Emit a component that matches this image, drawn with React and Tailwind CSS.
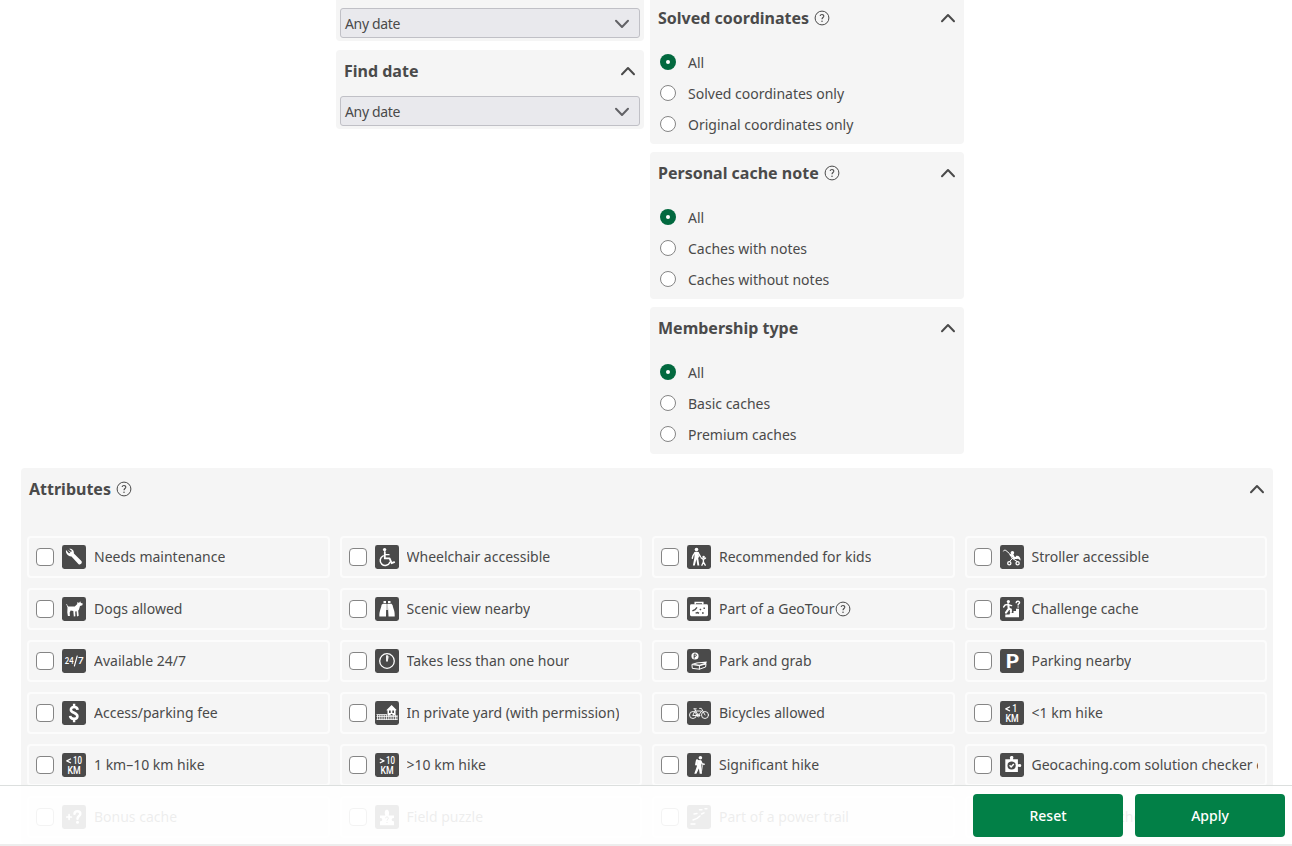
import React from "react";

const Chevron = ({ down = false, className = "" }) => (
  <svg width="16" height="10" viewBox="0 0 16 10" className={className} fill="none" stroke="currentColor" strokeWidth="2" strokeLinecap="round" strokeLinejoin="round">
    <path d={down ? "M2 1.8 L8 8 L14 1.8" : "M2 8.2 L8 2 L14 8.2"} />
  </svg>
);

const Help = () => (
  <svg width="16" height="16" viewBox="0 0 16 16" className="shrink-0" fill="none" stroke="#4a4a4a">
    <circle cx="8" cy="8" r="6.9" strokeWidth="1" />
    <path d="M6.2 6.1 C6.2 4 9.9 4 9.8 6.2 C9.7 7.5 8 7.6 8 9.3" strokeWidth="1.1" />
    <circle cx="8" cy="11.3" r="0.75" fill="#4a4a4a" stroke="none" />
  </svg>
);

const line = { fill: "none", stroke: "#fff", strokeLinecap: "round", strokeLinejoin: "round" };

const Km = ({ sign, value }) => (
  <g fill="#fff" fontFamily="Roboto, sans-serif" fontWeight="500">
    <path {...line} strokeWidth="1.2" strokeLinecap="butt" transform={value === "10" ? "" : "translate(1 0)"} d={sign === "<" ? "M9 5.8 L4.8 7.9 L9 10" : "M4.8 5.8 L9 7.9 L4.8 10"} />
    <text x={value === "10" ? 11 : 12.2} y="11" fontSize="10.5" textLength={value === "10" ? 9 : 5} lengthAdjust="spacingAndGlyphs">{value}</text>
    <text x="5.4" y="20.6" fontSize="11" textLength="13.2" lengthAdjust="spacingAndGlyphs">KM</text>
  </g>
);

const glyphs = {
  wrench: (
    <path fill="#fff" d="M5.2 4.4 L8.3 7.6 L10 6 L7.1 3.8 C9.4 3.2 12.2 4.8 11.9 8.4 L19.4 16.1 C20.7 18 18.6 20.4 16.6 19.2 L9.5 11.4 C5.7 11.6 3.4 8.1 4 5.1 L7 8.4 L9 7 L5.2 4.4 Z" />
  ),
  wheelchair: (
    <g {...line}>
      <circle cx="9.6" cy="4.6" r="1.7" fill="#fff" stroke="none" />
      <path d="M9.8 7 V13.4 H14.6 L16.6 18.2 L19.2 17.2" strokeWidth="1.8" />
      <path d="M10 9.7 H14" strokeWidth="1.3" />
      <path d="M8.2 10.9 A5 5 0 1 0 14.9 17.2" strokeWidth="1.5" />
    </g>
  ),
  kids: (
    <g {...line}>
      <circle cx="9.5" cy="4.6" r="1.8" fill="#fff" stroke="none" />
      <path fill="#fff" stroke="none" d="M7.6 7 H11.4 L12 12 L11.2 13 L12.3 20.5 H10.4 L9.4 14.2 L7.8 20.5 H5.9 L7.4 12.4 Z" />
      <path d="M8.2 7.4 L6 10.6 L5.3 13.2 M10.9 7.4 L13.4 11.6" strokeWidth="1.4" />
      <circle cx="16.6" cy="12" r="1.3" fill="#fff" stroke="none" />
      <path d="M14 12.8 L16.3 14.4 L18.5 13.1 M16.4 14.4 V17 L14.9 20.2 M16.4 17 L18.2 20.2" strokeWidth="1.4" />
    </g>
  ),
  stroller: (
    <g {...line}>
      <path d="M3.5 6 Q4 4.3 5.8 5.4 L9.4 8.5 L12.4 13.5 L9.8 16.2 M12 13.2 L16.7 16.2" strokeWidth="1" />
      <circle cx="12.4" cy="7.7" r="1.8" fill="#fff" stroke="none" />
      <path d="M12.5 10 L14 13 H17 M10.8 9.9 L13 11.2" strokeWidth="2.2" />
      <path d="M15.5 11.2 C18 9.7 20.6 11.8 20.6 15.4 L17.8 13.4 Z" fill="#fff" stroke="none" />
      <circle cx="9.3" cy="18.2" r="1.6" strokeWidth="1.3" /><circle cx="17.6" cy="18.2" r="1.6" strokeWidth="1.3" />
    </g>
  ),
  dog: (
    <path fill="#fff" d="M4.2 7.1 C5.6 6.9 5.2 9.3 6.4 9.6 H12.8 L15.1 7.2 L15.5 5 L17 6 L18.2 4.2 L18.9 6 L20.8 6.6 L20.3 8.2 L18 8.9 L17 12.4 L16.2 13.8 L16.7 18.8 L15 19.4 L14.6 14.3 L13.2 14.4 L13.4 19.2 L11.8 19.4 L11.3 14 L8.7 13.4 L7.7 15.4 L7.9 19 H5.9 L5.3 15.4 L5.5 10.6 Z" />
  ),
  binoculars: (
    <g fill="#fff">
      <path d="M8.5 4 H11 V6 H8.5 Z M13 4 H15.5 V6 H13 Z M8 6.8 H11.2 L11 19.5 H4.4 C4.2 14 6 11.8 6.6 7.8 Z M12.8 6.8 H16.5 L17.6 8.2 C18.4 12.2 20 14 19.7 19.5 H13.5 Z" />
      <path d="M11 7 H13 V13 H11 Z" opacity=".7" />
    </g>
  ),
  geotour: (
    <g>
      <path fill="none" stroke="#fff" strokeWidth="1.5" d="M8.2 7.5 V5.5 H15.8 V7.5" />
      <rect x="3" y="7.2" width="18" height="12" rx="1.4" fill="#fff" />
      <path fill="none" stroke="#4a4a4a" strokeWidth="1.4" d="M5.4 13.8 L8 12.7 L10 10.4 M8.6 16.2 L10.6 15.5 L12 16.4 M12.8 12 L14 13 M15 16 H16.7 M17.2 10.6 V12" />
    </g>
  ),
  challenge: (
    <g {...line}>
      <circle cx="8.4" cy="4.6" r="1.6" fill="#fff" stroke="none" />
      <path d="M8.2 7.4 L8.8 11.7 L6 15.6 M8.8 11.6 L10.8 12.4 L10.9 15" strokeWidth="2.1" />
      <path d="M8 7.4 L5.1 8 L3.6 10 M9 8 L11.6 8.6" strokeWidth="1.4" />
      <path d="M5.3 20.2 V17.5 H9.5 L10 15.9 H13.5 V13.9 H16 V11.7 H19 V20.2 Z" fill="#fff" stroke="none" />
      <path d="M16.2 5.6 C16.4 3.7 19.8 3.9 19.5 5.8 C19.3 6.9 18.1 6.8 18.1 8" strokeWidth="1.4" />
      <circle cx="18.1" cy="10" r=".8" fill="#fff" stroke="none" />
    </g>
  ),
  allday: (
    <g fill="#fff" fontFamily="Lato, sans-serif" fontSize="9.6" fontWeight="700">
      <text x="2.8" y="15.2" textLength="8.8" lengthAdjust="spacingAndGlyphs">24</text>
      <path {...line} strokeWidth="1.1" d="M15.2 7 L12.4 17" />
      <text x="16" y="15.2">7</text>
    </g>
  ),
  clock: (
    <g {...line}>
      <circle cx="12" cy="12" r="7.3" strokeWidth="1.3" />
      <path d="M12 6.2 V12.6" strokeWidth="1.8" strokeLinecap="butt" />
      <path d="M12.6 6.6 L14.4 7.6 L12.8 11.4 Z" fill="#fff" stroke="none" opacity=".5" />
    </g>
  ),
  parkgrab: (
    <g {...line}>
      <circle cx="8" cy="7" r="3.6" fill="#fff" stroke="none" />
      <path d="M7.2 9.2 V5.1 H8.3 C9.7 5.1 9.7 7.4 8.3 7.4 H7.3" stroke="#4a4a4a" strokeWidth="1" />
      <path d="M5.3 15.6 L12.4 16.6 V20.2 L5.7 19.4 Z M12.4 16.6 L19 15 L18.6 18 L12.4 20.2" strokeWidth="1" />
      <path d="M4.6 15 L9.6 13.6 L19.8 12.6 L19.2 15 L12.4 16.8 Z" fill="#fff" stroke="none" />
      <path d="M8 15 L11 14.3 L17.6 13.9 L12.4 15.7 Z" fill="#4a4a4a" stroke="none" />
    </g>
  ),
  parking: (
    <text x="5.4" y="18.8" fill="#fff" fontFamily="Lato, sans-serif" fontSize="19.5" fontWeight="900" textLength="13.4" lengthAdjust="spacingAndGlyphs">P</text>
  ),
  dollar: (
    <g {...line} strokeLinecap="butt">
      <path d="M15.6 8.8 C15.3 4.9 8.6 5.1 8.9 8.8 C9.1 12.1 15.4 11.5 15.4 15.3 C15.3 18.8 8.5 18.9 8.1 14.9" strokeWidth="2.6" />
      <path d="M12.1 2.8 V6 M12.1 17.6 V21.2" strokeWidth="2.4" />
    </g>
  ),
  yard: (
    <g>
      <path fill="#fff" d="M11.3 9.3 L16.6 3.9 L21.6 9.1 L20.6 9.4 V14.5 H12.5 V9.6 Z" />
      <path fill="#4a4a4a" d="M14 9.6 H15.7 V12 H14 Z M17.3 9.6 H19 V12 H17.3 Z M15.7 13 H17.5 V14.5 H15.7 Z" />
      <path fill="none" stroke="#fff" strokeWidth=".8" d="M1.5 13.5 H12 M1.5 15.4 H22.5 M1.5 18.4 H22.5" />
      <path fill="none" stroke="#fff" strokeWidth=".8" d="M2.5 14 V19 M4.3 14 V19 M6.1 14 V19 M7.9 14 V19 M9.7 14 V19 M11.5 14 V19 M13.3 14 V19 M15.1 14 V19 M16.9 14 V19 M18.7 14 V19 M20.5 14 V19 M22 14 V19" />
    </g>
  ),
  bicycle: (
    <g {...line} strokeWidth=".9">
      <circle cx="6" cy="14" r="3.5" /><circle cx="18" cy="14" r="3.5" />
      <path d="M6 14 L8.3 9.3 L11.4 14.5 H6 M8.6 10 H14.7 L11.4 14.5 M18 14 L14.4 7.4 H12.6 M8.3 9.3 L7.8 8 M6.8 7.8 H9.3" />
      <circle cx="11.4" cy="14.5" r="1.3" />
    </g>
  ),
  hiker: (
    <g {...line}>
      <circle cx="13.4" cy="4.7" r="1.8" fill="#fff" stroke="none" />
      <path fill="#fff" stroke="none" d="M10.6 7 L14.3 7.3 L14.4 13 L15 20.7 H12.7 L11.9 15.4 L9.4 20.7 H7.3 L9.8 13.5 Z" />
      <path d="M10 7.4 L9.2 11.4" strokeWidth="2.2" /><path d="M13.9 8.4 L15.2 10.9 L17.2 11.2" strokeWidth="1.4" />
      <path d="M16 10.6 L14.6 18" strokeWidth=".7" />
    </g>
  ),
  checker: (
    <g>
      <path fill="#fff" d="M5.3 6.3 H10.1 V5.5 C8.6 2 14.8 2 13.1 5.5 V6.3 H17.9 V11.2 H19 C22 9.8 22 15 19 13.8 H17.9 V19 H5.3 Z" />
      <circle cx="11.6" cy="12.5" r="4.1" fill="#4a4a4a" />
      <path d="M9.6 12.3 L11.1 13.9 L13.8 11" fill="none" stroke="#fff" strokeWidth="1.5" />
    </g>
  ),
  bonus: (
    <g {...line}>
      <path d="M4.8 12 H9.4 M7.1 9.7 V14.3" strokeWidth="1.7" />
      <path d="M12.5 8.8 C12.8 5.3 18.7 5.5 18.3 9 C18.1 11.2 15.5 11 15.5 13.8" strokeWidth="2.5" />
      <circle cx="15.5" cy="17.2" r="1.5" fill="#fff" stroke="none" />
    </g>
  ),
  puzzle: (
    <g>
      <path fill="#fff" d="M5 10.4 H10.3 C7.6 3 16 3 13.7 10.4 H19 V13.2 C16 12.4 16 17 19 16.2 V20.2 H5 V16.2 C8 17 8 12.4 5 13.2 Z" />
      <path d="M10.5 13.2 C10.7 11.4 13.5 11.6 13.3 13.4 C13.2 14.5 12 14.5 12 15.7 M12 17 V18" fill="none" stroke="#4a4a4a" strokeWidth="1" />
    </g>
  ),
  trail: (
    <path {...line} strokeWidth="1.4" d="M12.5 4.8 H15 M18 3.8 H20 M7 9 L10 8.5 M14.5 9 L17 7.8 M13 11 L10 13.4 L6 15 M4 19 H8" />
  ),
  team: (
    <g fill="#fff"><circle cx="8" cy="7" r="2.3" /><circle cx="16" cy="7" r="2.3" /><path d="M5 10 H19 V19 H14 V14 H10 V19 H5 Z" /></g>
  ),
  short: <Km sign="<" value="1" />,
  medium: <Km sign="<" value="10" />,
  long: <Km sign=">" value="10" />,
};

const attributes = [
  ["wrench", "Needs maintenance"],
  ["wheelchair", "Wheelchair accessible"],
  ["kids", "Recommended for kids"],
  ["stroller", "Stroller accessible"],
  ["dog", "Dogs allowed"],
  ["binoculars", "Scenic view nearby"],
  ["geotour", "Part of a GeoTour", true],
  ["challenge", "Challenge cache"],
  ["allday", "Available 24/7"],
  ["clock", "Takes less than one hour"],
  ["parkgrab", "Park and grab"],
  ["parking", "Parking nearby"],
  ["dollar", "Access/parking fee"],
  ["yard", "In private yard (with permission)"],
  ["bicycle", "Bicycles allowed"],
  ["short", "<1 km hike"],
  ["medium", "1 km–10 km hike"],
  ["long", ">10 km hike"],
  ["hiker", "Significant hike"],
  ["checker", "Geocaching.com solution checker enabled"],
  ["bonus", "Bonus cache"],
  ["puzzle", "Field puzzle"],
  ["trail", "Part of a power trail"],
  ["team", "Teamwork cache"],
];

function Attribute({ icon, label, help }) {
  return (
    <label className="flex h-[42px] min-w-0 items-center rounded border-2 border-[#fcfcfc] pr-[7px] pl-[7px]">
      <span className="h-[18px] w-[18px] shrink-0 rounded border border-[#858585] bg-white" />
      <svg width="24" height="24" viewBox="0 0 24 24" className="ml-2 shrink-0">
        <rect width="24" height="24" rx="2.4" fill="#4a4a4a" />
        {glyphs[icon]}
      </svg>
      <span className="ml-2 overflow-hidden whitespace-nowrap">{label}</span>
      {help && <Help />}
    </label>
  );
}

function Header({ title, help }) {
  return (
    <div className="flex h-[42px] items-center px-2">
      <h2 className="mr-[5px] text-[16px] font-bold">{title}</h2>
      {help && <Help />}
      <Chevron className="ml-auto" />
    </div>
  );
}

function RadioPanel({ title, help, options }) {
  return (
    <section className="h-[147px] rounded bg-[#f5f5f5]">
      <Header title={title} help={help} />
      <div className="flex flex-col pt-[7px] pl-[10px]">
        {options.map((option, i) => (
          <label key={option} className="flex h-[31px] items-center">
            {i === 0 ? (
              <span className="flex h-4 w-4 items-center justify-center rounded-full bg-[#02693f]">
                <span className="h-1 w-1 rounded-full bg-white" />
              </span>
            ) : (
              <span className="h-4 w-4 rounded-full border border-[#858585] bg-white" />
            )}
            <span className="ml-3 pt-0.5 leading-5">{option}</span>
          </label>
        ))}
      </div>
    </section>
  );
}

const DateSelect = () => (
  <div className="mx-1 flex h-[30px] items-center rounded-[3px] border border-[#c0c0c6] bg-[#e9e9ed] pr-[9px] pl-1">
    <span className="pt-0.5 tracking-[-0.35px]">Any date</span>
    <Chevron down className="mt-px ml-auto text-[#626266]" />
  </div>
);

export default function App() {
  return (
    <div className="relative h-[846px] w-[1292px] overflow-hidden bg-white font-['Noto_Sans',sans-serif] text-[14px] leading-5 text-[#4a4a4a]">
      <div className="-mt-[3px] flex items-start gap-[6px] pl-[336px]">
        <div className="flex w-[308px] flex-col gap-[9px]">
          <section className="h-11 rounded-b bg-[#f5f5f5] pt-[11px]">
            <DateSelect />
          </section>
          <section className="h-[79px] rounded bg-[#f5f5f5]">
            <Header title="Find date" />
            <div className="pt-1"><DateSelect /></div>
          </section>
        </div>
        <div className="flex w-[314px] flex-col gap-2">
          <RadioPanel title="Solved coordinates" help options={["All", "Solved coordinates only", "Original coordinates only"]} />
          <RadioPanel title="Personal cache note" help options={["All", "Caches with notes", "Caches without notes"]} />
          <RadioPanel title="Membership type" options={["All", "Basic caches", "Premium caches"]} />
        </div>
      </div>

      <section className="mt-[14px] ml-[21px] w-[1252px] rounded bg-[#f5f5f5] pb-[6px]">
        <Header title="Attributes" help />
        <div className="grid grid-cols-4 gap-[10px] px-[6px] pt-[26px]">
          {attributes.map(([icon, label, help]) => (
            <Attribute key={label} icon={icon} label={label} help={help} />
          ))}
        </div>
      </section>

      <footer className="absolute inset-x-0 bottom-0 flex h-[61px] justify-end gap-3 border-t border-b-2 border-t-[#dcdfde] border-b-[#ededed] bg-white/90 pt-2 pr-[7px] font-medium text-white">
        <button className="h-[43px] w-[150px] rounded bg-[#028047]">Reset</button>
        <button className="h-[43px] w-[150px] rounded bg-[#028047]">Apply</button>
      </footer>
    </div>
  );
}
